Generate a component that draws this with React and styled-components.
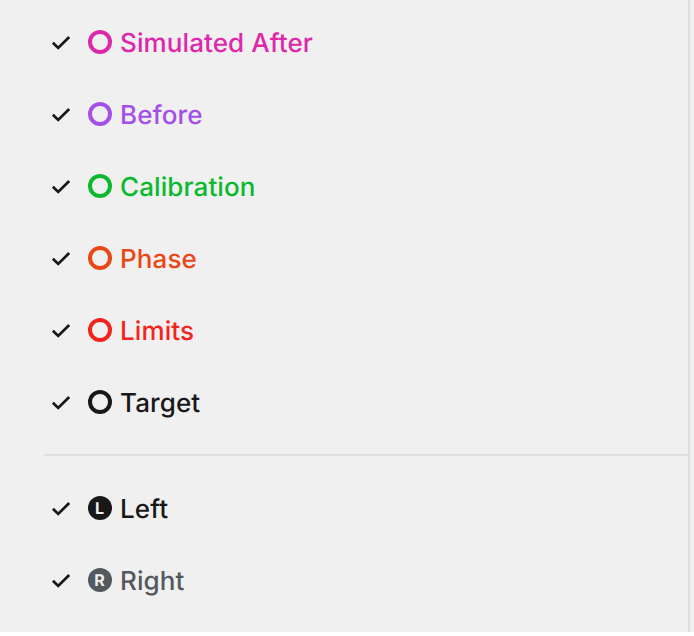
import React from "react";
import styled, { createGlobalStyle } from "styled-components";

const GlobalStyle = createGlobalStyle`
  body {
    margin: 0;
    background: #fff;
    font-family: Inter, sans-serif;
    text-rendering: geometricPrecision;
  }
`;
const Page = styled.div`
  height: 632px;
  background: #f0f0f0;
`;
const Panel = styled.main`
  box-sizing: border-box;
  width: 690px;
  height: 632px;
  padding: 6px 0 0 44px;
  border-right: 2px solid #dfdfe0;
`;
const Group = styled.ul`
  list-style: none;
  margin: 0;
  padding: 0;
`;
const Row = styled.li`
  display: flex;
  align-items: center;
  height: 72px;
  color: ${(p) => p.$color};
`;
const Check = styled.svg`
  width: 20px;
  height: 20px;
  margin: 0 17px 0 7px;
  fill: none;
  stroke: #18181a;
  stroke-width: 2.7;
`;
const Ring = styled.span`
  box-sizing: border-box;
  width: 24px;
  height: 24px;
  margin-right: 8px;
  border: 4px solid currentColor;
  border-radius: 50%;
`;
const Badge = styled.span`
  box-sizing: border-box;
  width: 24px;
  height: 24px;
  margin-right: 8px;
  padding-right: 1px;
  border-radius: 50%;
  background: ${(p) => p.$color};
  color: #f0f0f0;
  font-size: 16px;
  font-weight: 700;
  line-height: 24px;
  text-align: center;
`;
const Label = styled.span`
  padding-top: 3px;
  font-size: 26px;
  font-weight: 500;
  line-height: 36px;
  letter-spacing: 0.1px;
`;
const Divider = styled.hr`
  height: 2px;
  margin: 16px 0;
  border: 0;
  background: #dfdfe0;
`;

const curves = [
  ["Simulated After", "#dc28aa"],
  ["Before", "#a54feb"],
  ["Calibration", "#0ab92d"],
  ["Phase", "#ea4717"],
  ["Limits", "#f5231d"],
  ["Target", "#18181a"],
];
const channels = [
  ["Left", "#18181a", "L"],
  ["Right", "#55585e", "R"],
];

function Item({ name, color, letter }) {
  return (
    <Row $color={color}>
      <Check viewBox="0 0 20 20"><path d="M1.9 10.7 7.2 15.9 18.2 5" /></Check>
      {letter ? <Badge $color={color}>{letter}</Badge> : <Ring />}
      <Label>{name}</Label>
    </Row>
  );
}

export default function App() {
  return (
    <>
      <GlobalStyle />
      <Page>
        <Panel>
          <Group>{curves.map(([n, c]) => <Item key={n} name={n} color={c} />)}</Group>
          <Divider />
          <Group>{channels.map(([n, c, l]) => <Item key={n} name={n} color={c} letter={l} />)}</Group>
        </Panel>
      </Page>
    </>
  );
}
